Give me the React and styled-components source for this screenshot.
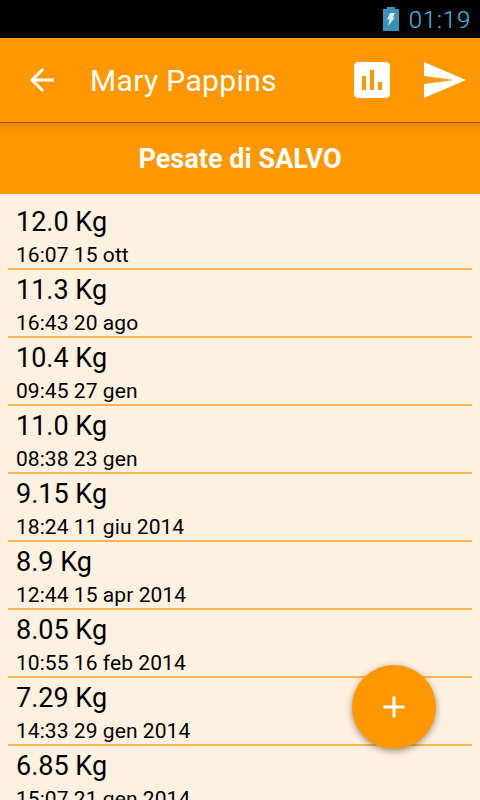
import React from 'react';
import styled, { createGlobalStyle } from 'styled-components';

const weighings = [
  { weight: '12.0 Kg', date: '16:07 15 ott' },
  { weight: '11.3 Kg', date: '16:43 20 ago' },
  { weight: '10.4 Kg', date: '09:45 27 gen' },
  { weight: '11.0 Kg', date: '08:38 23 gen' },
  { weight: '9.15 Kg', date: '18:24 11 giu 2014' },
  { weight: '8.9 Kg', date: '12:44 15 apr 2014' },
  { weight: '8.05 Kg', date: '10:55 16 feb 2014' },
  { weight: '7.29 Kg', date: '14:33 29 gen 2014' },
  { weight: '6.85 Kg', date: '15:07 21 gen 2014' },
];

const GlobalStyle = createGlobalStyle`
  * {
    box-sizing: border-box;
  }
  body {
    margin: 0;
    background: #fff1df;
    font-family: Roboto, 'Liberation Sans', sans-serif;
  }
`;

const Screen = styled.div`
  position: relative;
  display: flex;
  flex-direction: column;
  width: 480px;
  height: 800px;
  overflow: hidden;
  background: #fff1df;
`;

const StatusBar = styled.div`
  display: flex;
  flex: none;
  align-items: center;
  justify-content: flex-end;
  gap: 10px;
  height: 38px;
  padding-right: 9px;
  background: #000;
`;

const Clock = styled.span`
  padding-top: 2px;
  font-size: 24px;
  font-weight: 300;
  line-height: 36px;
  letter-spacing: 0.8px;
  color: #3cc0f0;
`;

const Toolbar = styled.header`
  display: flex;
  flex: none;
  align-items: center;
  height: 84px;
  padding: 0 12px 0 24px;
  background: #ff9800;
`;

const Title = styled.h1`
  flex: 1;
  margin: 0 0 0 30px;
  padding-top: 2px;
  font-size: 30px;
  font-weight: 400;
  line-height: 82px;
  letter-spacing: 0.35px;
  color: #fff;
`;

const IconButton = styled.button`
  display: flex;
  padding: 0;
  margin-left: ${({ $gap }) => $gap || 0}px;
  border: 0;
  background: none;
  color: #fff;
`;

const Subheader = styled.h2`
  flex: none;
  height: 72px;
  margin: 0;
  padding-top: 1px;
  border-top: 1px solid #945a06;
  background: linear-gradient(#e08600, #f29000 4px, #fc9600 10px, #ff9800 15px);
  font-size: 27px;
  font-weight: 700;
  line-height: 71px;
  letter-spacing: 0.05px;
  text-align: center;
  color: #fff;
`;

const List = styled.ul`
  flex: none;
  margin: 0;
  padding: 8px;
  list-style: none;
`;

const Item = styled.li`
  height: 68px;
  padding: 3px 8px 0;
  border-bottom: 2px solid #ffb74d;
  color: #000;
`;

const Weight = styled.div`
  font-size: 27px;
  line-height: 34px;
`;

const DateText = styled.div`
  padding-top: 1px;
  font-size: 21px;
  line-height: 31px;
  letter-spacing: 0.06px;
`;

const AddButton = styled.button`
  position: absolute;
  right: 44px;
  bottom: 51px;
  display: flex;
  align-items: center;
  justify-content: center;
  width: 84px;
  height: 84px;
  padding: 0;
  border: 0;
  border-radius: 50%;
  background: #ff9800;
  color: #fff;
  box-shadow: 0 2px 7px rgba(0, 0, 0, 0.42);
`;

const Icon = ({ size, d }) => (
  <svg width={size} height={size} viewBox="0 0 24 24" fill="currentColor">
    <path d={d} />
  </svg>
);

const BatteryIcon = () => (
  <svg width="16" height="24" viewBox="0 0 16 24">
    <path d="M4 0h8v2h4v22H0V2h4z" fill="#3993b8" />
    <path d="M7 6h5l-2 4.5h2L5 19l1.5-6.5H4z" fill="#d7eaf1" />
  </svg>
);

const App = () => (
  <>
    <GlobalStyle />
    <Screen>
      <StatusBar>
        <BatteryIcon />
        <Clock>01:19</Clock>
      </StatusBar>
      <Toolbar>
        <IconButton aria-label="Indietro">
          <Icon size={36} d="M20 11H7.83l5.59-5.59L12 4l-8 8 8 8 1.41-1.41L7.83 13H20v-2z" />
        </IconButton>
        <Title>Mary Pappins</Title>
        <IconButton aria-label="Grafico">
          <Icon
            size={48}
            d="M19 3H5c-1.1 0-2 .9-2 2v14c0 1.1.9 2 2 2h14c1.1 0 2-.9 2-2V5c0-1.1-.9-2-2-2zM9 17H7v-7h2v7zm4 0h-2V7h2v10zm4 0h-2v-4h2v4z"
          />
        </IconButton>
        <IconButton aria-label="Invia" $gap={24}>
          <Icon size={48} d="M2.01 21L23 12 2.01 3 2 10l15 2-15 2z" />
        </IconButton>
      </Toolbar>
      <Subheader>Pesate di SALVO</Subheader>
      <List>
        {weighings.map((item) => (
          <Item key={item.date}>
            <Weight>{item.weight}</Weight>
            <DateText>{item.date}</DateText>
          </Item>
        ))}
      </List>
      <AddButton aria-label="Aggiungi">
        <Icon size={36} d="M19 13h-6v6h-2v-6H5v-2h6V5h2v6h6v2z" />
      </AddButton>
    </Screen>
  </>
);

export default App;
